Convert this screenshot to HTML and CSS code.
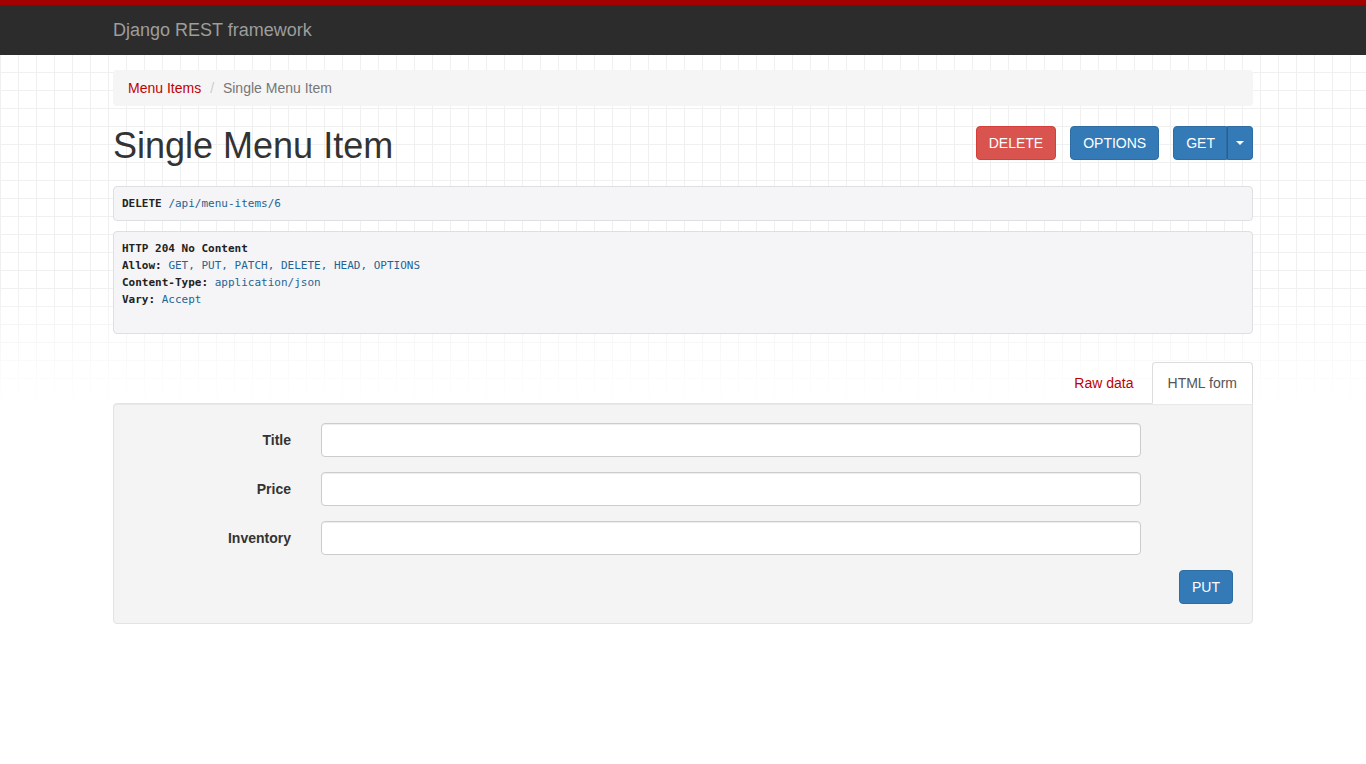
FILE: index.html
```html
<!DOCTYPE html>
<html lang="en">
<head>
<meta charset="utf-8">
<title>Single Menu Item – Django REST framework</title>
<link rel="stylesheet" href="styles.css">
</head>
<body>
<header class="navbar">
  <div class="container">
    <a class="brand" href="#">Django REST framework</a>
  </div>
</header>

<main class="container">
  <ul class="breadcrumb">
    <li><a href="#">Menu Items</a></li>
    <li class="active">Single Menu Item</li>
  </ul>

  <div class="page-header">
    <h1>Single Menu Item</h1>
    <div class="actions">
      <button class="btn btn-danger">DELETE</button>
      <button class="btn btn-primary">OPTIONS</button>
      <div class="btn-group">
        <button class="btn btn-primary btn-get">GET</button>
        <button class="btn btn-primary dropdown-toggle"><span class="caret"></span></button>
      </div>
    </div>
  </div>

  <pre class="info"><b>DELETE</b> <span class="lit">/api/menu-items/6</span></pre>
  <pre class="info"><b>HTTP 204 No Content</b>
<b>Allow:</b> <span class="lit">GET, PUT, PATCH, DELETE, HEAD, OPTIONS</span>
<b>Content-Type:</b> <span class="lit">application/json</span>
<b>Vary:</b> <span class="lit">Accept</span>
&#32;
</pre>

  <ul class="tabs">
    <li><a href="#">Raw data</a></li>
    <li class="active"><a href="#">HTML form</a></li>
  </ul>

  <div class="well">
    <form class="form">
      <label class="label" for="f-title">Title</label>
      <input class="input" id="f-title" type="text">
      <label class="label" for="f-price">Price</label>
      <input class="input" id="f-price" type="text">
      <label class="label" for="f-inv">Inventory</label>
      <input class="input" id="f-inv" type="text">
      <div class="form-actions">
        <button class="btn btn-primary" type="button">PUT</button>
      </div>
    </form>
  </div>
</main>
</body>
</html>
```
FILE: styles.css
```css
* { box-sizing: border-box; }

html, body { margin: 0; padding: 0; }

body {
  font-family: "Liberation Sans", Arial, Helvetica, sans-serif;
  font-size: 14px;
  line-height: 20px;
  color: #333;
  min-height: 764px;
  background:
    linear-gradient(to bottom, rgba(255,255,255,0) 230px, #fff 350px) 0 54px / 100% 350px no-repeat,
    repeating-linear-gradient(to right, #f0f0f0 0 1px, transparent 1px 18px) 0 54px / 100% 350px no-repeat,
    repeating-linear-gradient(to bottom, #f0f0f0 0 1px, transparent 1px 18px) 0 54px / 100% 350px no-repeat,
    #fff;
}

a { color: #c20000; text-decoration: none; }

.container {
  width: 1140px;
  margin: 0 auto;
}

/* navbar */
.navbar {
  background: #2c2c2c;
  border-top: 5px solid #a30000;
  height: 55px;
}
.navbar .container {
  display: flex;
  align-items: center;
  height: 50px;
}
.brand {
  color: #9d9d9d;
  font-size: 18px;
  line-height: 20px;
}

/* breadcrumb */
.breadcrumb {
  list-style: none;
  margin: 15px 0 20px;
  padding: 8px 15px;
  background: #f5f5f5;
  border-radius: 4px;
  display: flex;
}
.breadcrumb li + li::before {
  content: "/\00a0";
  padding: 0 5px 0 9px;
  color: #ccc;
}
.breadcrumb .active { color: #777; }

/* header */
.page-header {
  display: flex;
  justify-content: space-between;
  align-items: flex-start;
  margin-bottom: 20px;
}
h1 {
  margin: 0;
  font-size: 36px;
  font-weight: 500;
  line-height: 39.6px;
  color: #333;
}
.actions {
  display: flex;
  gap: 14px;
}
.btn-group { display: flex; }

.btn {
  font-family: inherit;
  font-size: 14px;
  line-height: 20px;
  padding: 6px 12px;
  border: 1px solid transparent;
  border-radius: 4px;
  color: #fff;
  cursor: pointer;
  height: 34px;
}
.btn-danger { background: #d9534f; border-color: #d43f3a; }
.btn-primary { background: #337ab7; border-color: #2e6da4; }
.btn-group .btn:first-child { border-top-right-radius: 0; border-bottom-right-radius: 0; }
.btn-get { padding-right: 11px; }
.btn-group .dropdown-toggle {
  border-top-left-radius: 0;
  border-bottom-left-radius: 0;
  border-left-color: #285f8f;
  padding: 0 8px;
  width: 26px;
  display: flex;
  align-items: center;
  justify-content: center;
}
.caret {
  display: block;
  width: 0;
  height: 0;
  border-top: 4px solid #fff;
  border-left: 4px solid transparent;
  border-right: 4px solid transparent;
}

/* response info */
.info {
  margin: 0 0 10px;
  padding: 8px;
  background: #f5f5f7;
  border: 1px solid #dfdfe3;
  border-radius: 4px;
  font-family: "DejaVu Sans Mono", "Liberation Mono", monospace;
  font-size: 11px;
  line-height: 17px;
  color: #222;
  white-space: pre;
}
.info b { font-weight: bold; color: #222; }
.info .lit { color: #1f6495; }

/* tabs */
.tabs {
  list-style: none;
  margin: 28px 0 -1px;
  padding: 0;
  display: flex;
  justify-content: flex-end;
  position: relative;
  z-index: 1;
}
.tabs li a {
  display: block;
  padding: 10px 15px;
  line-height: 20px;
  border: 1px solid transparent;
  border-radius: 4px 4px 0 0;
  margin-left: 2px;
}
.tabs li.active a {
  color: #555;
  background: #fff;
  border-color: #ddd #ddd transparent;
}

/* well & form */
.well {
  background: #f4f4f4;
  border: 1px solid #e3e3e3;
  border-radius: 4px;
  border-top-right-radius: 0;
  padding: 19px;
  box-shadow: inset 0 1px 1px rgba(0,0,0,.05);
}
.form {
  display: grid;
  grid-template-columns: 158px 820px;
  column-gap: 30px;
  row-gap: 15px;
  align-items: center;
}
.label {
  text-align: right;
  font-weight: bold;
  color: #333;
}
.input {
  height: 34px;
  padding: 6px 12px;
  font-family: inherit;
  font-size: 14px;
  border: 1px solid #ccc;
  border-radius: 4px;
  background: #fff;
  box-shadow: inset 0 1px 1px rgba(0,0,0,.075);
  width: 100%;
}
.form-actions {
  grid-column: 1 / -1;
  display: flex;
  justify-content: flex-end;
  width: 1100px;
}
```
